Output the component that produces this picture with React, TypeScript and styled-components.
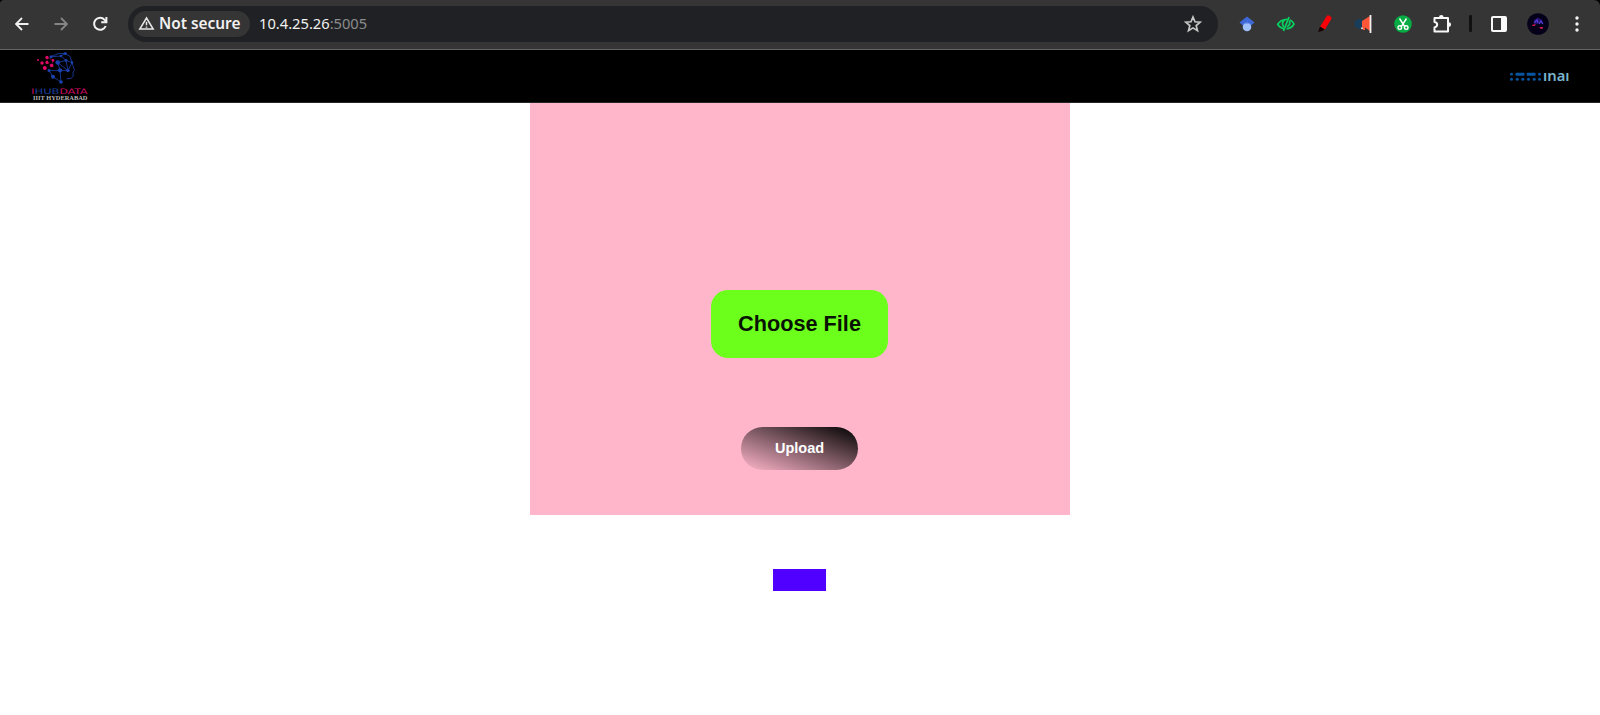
import React from 'react';
import styled, { createGlobalStyle } from 'styled-components';

const GlobalStyle = createGlobalStyle`
  *, *::before, *::after { box-sizing: border-box; }
  html, body { margin: 0; background: #fff; overflow: hidden; }
  button { border: 0; padding: 0; }
`;

const Window = styled.div`
  height: 715px;
  display: flex;
  flex-direction: column;
  background: #fff;
`;

const ToolbarEdge = styled.div`
  flex: none;
  background: #000;
`;

const Toolbar = styled.header`
  height: 50px;
  display: flex;
  align-items: center;
  padding: 0 3px 2px;
  background: #353535;
  border-bottom: 1px solid #666;
  border-radius: 4px 6px 0 0;
`;

const Slot = styled.span<{ $width?: number }>`
  flex: none;
  width: ${({ $width = 39 }) => $width}px;
  height: 36px;
  display: flex;
  align-items: center;
  justify-content: center;
  svg { display: block; }
`;

const AddressBar = styled.div`
  width: 1090px;
  height: 36px;
  flex: none;
  margin: 0 9px;
  padding: 0 6px 0 5px;
  display: flex;
  align-items: center;
  background: #202124;
  border-radius: 18px;
`;

const SecurityChip = styled.span`
  width: 117px;
  height: 26px;
  padding-left: 5px;
  display: flex;
  align-items: center;
  gap: 4px;
  background: #353535;
  border-radius: 13px;
  color: #f1f1f1;
  font: 600 15.4px/27px 'Noto Sans', sans-serif;
  white-space: nowrap;
  svg { flex: none; }
`;

const Url = styled.span`
  margin-left: 9px;
  flex: 1;
  color: #f1f1f1;
  font: 400 14.7px/27px 'Noto Sans', sans-serif;
`;

const Port = styled.span`
  color: #8b8c8e;
`;

const Divider = styled.i`
  width: 3px;
  height: 17px;
  border-radius: 1px;
  background: #111;
`;

const SiteHeader = styled.nav`
  flex: none;
  height: 53px;
  display: flex;
  justify-content: space-between;
  padding: 0 30px;
  background: #000;
  border-bottom: 1px solid #252525;
  svg { display: block; }
`;

const Main = styled.main`
  display: flex;
  flex-direction: column;
  align-items: center;
`;

const UploadPanel = styled.form`
  width: 540px;
  height: 412px;
  display: flex;
  flex-direction: column;
  align-items: center;
  padding-top: 187px;
  padding-right: 1px;
  gap: 68.5px;
  background: #ffb6cb;
`;

const ChooseButton = styled.button`
  width: 177px;
  height: 68px;
  border-radius: 17px;
  background: #6cff1c;
  color: #081303;
  font: bold 21.7px/68px 'Liberation Sans', sans-serif;
`;

const UploadButton = styled.button`
  width: 117px;
  height: 43.5px;
  border-radius: 22px;
  background: linear-gradient(to top right, #ffb6cb, #000);
  color: #fff;
  font: bold 14.5px/42px 'Liberation Sans', sans-serif;
`;

const ResultBar = styled.div`
  width: 53px;
  height: 21.5px;
  margin: 54px 1px 0 0;
  background: #4f00ff;
`;

const BackIcon = ({ color, flip }: { color: string; flip?: boolean }) => (
  <svg width="14" height="14" viewBox="0 0 14 14" fill="none" stroke={color} strokeWidth="1.8">
    <path d={flip ? 'M.5 7H12.5M7 1L13 7L7 13' : 'M13.5 7H1.5M7 1L1 7L7 13'} />
  </svg>
);

const ReloadIcon = () => (
  <svg width="16" height="16" viewBox="0 0 16 16" fill="none" stroke="#f1f1f1" strokeWidth="2">
    <path d="M13.7 10A6 6 0 1 1 12.6 3.8L14.2 5.5" />
    <path d="M14.4 1V6.2H9.2" />
  </svg>
);

const WarningIcon = () => (
  <svg width="17" height="15" viewBox="0 0 17 15" fill="none" stroke="#e8e8e8" strokeWidth="1.5">
    <path d="M8.5 2L15.2 13.1H1.8Z" />
    <path d="M8.5 5.8V9.3M8.5 10.4V11.8" />
  </svg>
);

const StarIcon = () => (
  <svg width="18" height="18" viewBox="0 0 18 18" fill="none" stroke="#c7c7c7" strokeWidth="1.7">
    <path d="M9 2L11 6.8L16.2 7.2L12.2 10.6L13.5 15.7L9 12.9L4.5 15.7L5.8 10.6L1.8 7.2L7 6.8Z" />
  </svg>
);

const ScholarIcon = () => (
  <svg width="16" height="16" viewBox="0 0 16 16">
    <path d="M8 .5L15.5 6.5L12 9.5H4L.5 6.5Z" fill="#3f68d8" />
    <circle cx="8" cy="11" r="4.3" fill="#a0c0fb" />
    <path d="M4 9A4.4 4.4 0 0 1 12 9L11 8H5Z" fill="#7099ee" />
  </svg>
);

const HiddenEyeIcon = () => (
  <svg width="20" height="16" viewBox="0 0 20 16" fill="none" stroke="#08cf60" strokeWidth="1.8">
    <path d="M8 12.7Q4 12.2 1.8 8.3Q4.5 3.5 11 3.3M13.5 3.8Q16.8 5.3 18 8Q15.5 12.5 10.5 12.8" />
    <path d="M13 1L7.5 15M8.5 4Q4.8 7.2 7.8 11M13.3 5Q15 8.4 11 11" />
  </svg>
);

const MarkerIcon = () => (
  <svg width="16" height="20" viewBox="0 0 16 20">
    <path d="M9.5 2.5Q10.5 .7 12.3 1.7L14.2 3Q15 3.8 14.3 5L8 15.5L3 12.7Z" fill="#fb0007" />
    <path d="M3 12.5L7.6 15.2L5.2 17L1.2 18Z" fill="#180000" />
  </svg>
);

const MegaphoneIcon = () => (
  <svg width="20" height="20" viewBox="0 0 20 20">
    <circle cx="5.5" cy="10" r="5" fill="#183e5c" />
    <path d="M8 7L16 2V17L11 13.5V16H9L8 12Z" fill="#ff5638" />
    <path d="M16.5 1V19" stroke="#f4eeee" strokeWidth="1.8" />
    <circle cx="8" cy="14.3" r="1" fill="#ddd" />
  </svg>
);

const ScissorsIcon = () => (
  <svg width="18" height="18" viewBox="0 0 18 18">
    <circle cx="9" cy="9" r="8.8" fill="#06ac43" />
    <g fill="none" stroke="#fff" strokeWidth="1.4">
      <path d="M5.5 3.5L11 12M12.5 3.5L7 12" />
      <circle cx="5.8" cy="12.6" r="1.8" />
      <circle cx="12.2" cy="12.6" r="1.8" />
    </g>
  </svg>
);

const PuzzleIcon = () => (
  <svg width="20" height="20" viewBox="0 0 20 20">
    <path
      d="M2.5 4H16V17.4H2.5V13.5Q5.2 12.8 5.2 10.6T2.5 8Z"
      fill="none"
      stroke="#f8f8f8"
      strokeWidth="2"
      strokeLinejoin="round"
    />
    <path d="M7 3.2A2.3 2.3 0 0 1 11.6 3.2ZM16.8 8.3A2.3 2.3 0 0 1 16.8 12.9Z" fill="#f8f8f8" />
  </svg>
);

const SidePanelIcon = () => (
  <svg width="16" height="16" viewBox="0 0 16 16">
    <rect x="1" y="1" width="14" height="14" rx="1" fill="none" stroke="#fafafa" strokeWidth="2" />
    <path d="M10 1H15V15H10Z" fill="#fafafa" />
  </svg>
);

const AvatarIcon = () => (
  <svg width="22" height="22" viewBox="0 0 22 22">
    <circle cx="11" cy="11" r="10.8" fill="#050019" />
    <path d="M7 7L11 4.5L15 7L16 11L12 10L8 12Z" fill="#28106f" />
    <path d="M7 10L10 7L11 10M12 11L14 8L16 11" stroke="#4f3bd1" strokeWidth="1.3" fill="none" />
    <path d="M5 12L8.5 11L8 13L5 12.8ZM12.5 14H16L15.5 16L13 15.5Z" fill="#d51b4d" />
  </svg>
);

const MenuIcon = () => (
  <svg width="4" height="16" viewBox="0 0 4 16" fill="#f5f5f5">
    <circle cx="2" cy="2" r="1.7" />
    <circle cx="2" cy="8" r="1.7" />
    <circle cx="2" cy="14" r="1.7" />
  </svg>
);

const pinkNodes = [[8, 10, 1], [17, 7.4, 1.7], [12, 13, 1.7], [17, 12.4, 1.6], [23, 10.4, 1.3], [14.8, 18, 2], [21.7, 15.5, 1.8]];
const blueNodes = [[21, 6.7, 1.5], [35.3, 3.5, 1.6], [31, 6, 1.2], [42, 12.6, 1.3], [36, 10.4, 1.4], [27.7, 12.5, 2.3], [38, 20.6, 1.7], [30, 20.3, 2.1], [19, 20.6, 1.5], [23, 26.8, 2], [31, 32, 1.8]];

const HubLogo = () => (
  <svg width="60" height="52" viewBox="0 0 60 52">
    <g fill="none" stroke="#173a9c" strokeWidth="0.9">
      <path d="M21 6.7L28 3.7L35.3 3.5L40 6.5L42 12.6L44.5 20.5L43 22L43.2 26L41 28.5L36.5 28.8" />
      <path d="M31 32L23 26.8L19 20.6H38L36 10.4L42 12.6L38 20.6" />
      <path d="M21 6.7L31 6L36 10.4L27.7 12.5M31 6L35.3 3.5M27.7 12.5L30 20.3M27.7 12.5L38 20.6M30 20.3L31 32" />
    </g>
    <path d="M17 12.4L17 7.4L23 10.4L21.7 15.5L17 12.4" fill="none" stroke="#970a4b" strokeWidth="0.6" />
    {blueNodes.map(([x, y, r], i) => <circle key={i} cx={x} cy={y} r={r} fill="#1b41b0" />)}
    {pinkNodes.map(([x, y, r], i) => <circle key={i} cx={x} cy={y} r={r} fill="#e00a68" />)}
    <g fontFamily="'DejaVu Sans', sans-serif" fontSize="7.6">
      <text x="1.3" y="43.5" fill="#d40b65" textLength="3" lengthAdjust="spacingAndGlyphs">I</text>
      <text x="4.5" y="43.5" fill="#1c3f9c" textLength="25" lengthAdjust="spacingAndGlyphs">HUB</text>
      <text x="29.5" y="43.5" fill="#d40b65" textLength="28" lengthAdjust="spacingAndGlyphs">DATA</text>
    </g>
    <text x="3" y="49.7" fill="#b8b8b8" fontFamily="'Liberation Serif', serif" fontWeight="700" fontSize="5.6" textLength="54.5" lengthAdjust="spacingAndGlyphs">IIIT HYDERABAD</text>
  </svg>
);

const InaiLogo = () => (
  <svg width="61" height="52" viewBox="0 0 61 52">
    <g fill="#0755a0">
      {[2.5, 8.2, 13.8, 19.5, 25.2, 30.5].map((x) => <circle key={x} cx={x} cy="29.2" r="1.5" />)}
      <circle cx="2.5" cy="24.2" r="1.4" />
      <rect x="6.5" y="22.7" width="9" height="3" rx="1" />
      <rect x="17.6" y="22.7" width="9" height="3" rx="1" />
      <circle cx="30.5" cy="24.2" r="1.4" />
    </g>
    <text x="34" y="30.8" fill="#7bb4ce" fontFamily="'Noto Sans', sans-serif" fontWeight="600" fontSize="15" textLength="26.5" lengthAdjust="spacingAndGlyphs">ınaı</text>
  </svg>
);

const extensions = [ScholarIcon, HiddenEyeIcon, MarkerIcon, MegaphoneIcon, ScissorsIcon, PuzzleIcon];
const browserControls = [SidePanelIcon, AvatarIcon, MenuIcon];

export default function App() {
  return (
    <>
      <GlobalStyle />
      <Window>
        <ToolbarEdge>
          <Toolbar>
            <Slot $width={38.5}><BackIcon color="#f1f1f1" /></Slot>
            <Slot $width={38.5}><BackIcon color="#858585" flip /></Slot>
            <Slot><ReloadIcon /></Slot>
            <AddressBar>
              <SecurityChip><WarningIcon />Not secure</SecurityChip>
              <Url>10.4.25.26<Port>:5005</Port></Url>
              <Slot><StarIcon /></Slot>
            </AddressBar>
            {extensions.map((Icon, i) => <Slot key={i}><Icon /></Slot>)}
            <Slot $width={18}><Divider /></Slot>
            {browserControls.map((Icon, i) => <Slot key={i}><Icon /></Slot>)}
          </Toolbar>
        </ToolbarEdge>
        <SiteHeader>
          <HubLogo />
          <InaiLogo />
        </SiteHeader>
        <Main>
          <UploadPanel>
            <ChooseButton type="button">Choose File</ChooseButton>
            <UploadButton type="button">Upload</UploadButton>
          </UploadPanel>
          <ResultBar />
        </Main>
      </Window>
    </>
  );
}
